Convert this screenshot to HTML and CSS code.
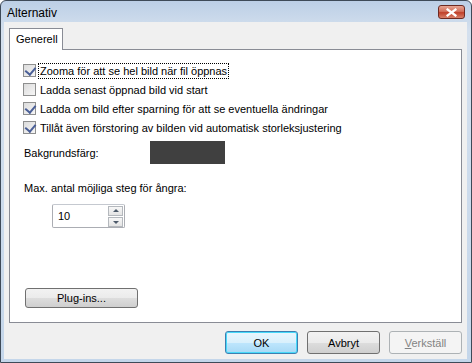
FILE: index.html
```html
<!DOCTYPE html>
<html lang="sv">
<head>
    <meta charset="UTF-8">
    <title>Alternativ</title>
    <link rel="stylesheet" href="styles.css">
</head>
<body>
    <div class="window">
        <div class="titlebar">
            <span class="title">Alternativ</span>
            <button class="close" title="Stäng">
                <svg width="11" height="9" viewBox="0 0 11 9"><path d="M1.5 1.5 L9.5 7.5 M9.5 1.5 L1.5 7.5" stroke="#fff" stroke-width="2.2" stroke-linecap="square"/></svg>
            </button>
        </div>
        <div class="client">
            <div class="tabs">
                <div class="tab active">Generell</div>
            </div>
            <div class="panel">
                <label class="check focus"><span class="box checked"></span><span class="text">Zooma för att se hel bild när fil öppnas</span></label>
                <label class="check"><span class="box"></span><span class="text">Ladda senast öppnad bild vid start</span></label>
                <label class="check"><span class="box checked"></span><span class="text">Ladda om bild efter sparning för att se eventuella ändringar</span></label>
                <label class="check"><span class="box checked"></span><span class="text">Tillåt även förstoring av bilden vid automatisk storleksjustering</span></label>

                <div class="color-row">
                    <span class="label">Bakgrundsfärg:</span>
                    <span class="swatch"></span>
                </div>

                <div class="label undo-label">Max. antal möjliga steg för ångra:</div>
                <div class="spinner">
                    <span class="value">10</span>
                    <span class="spin">
                        <span class="arrow up"></span>
                        <span class="arrow down"></span>
                    </span>
                </div>

                <button class="btn plugins">Plug-ins...</button>
            </div>
            <div class="footer">
                <button class="btn default">OK</button>
                <button class="btn">Avbryt</button>
                <button class="btn" disabled><u>V</u>erkställ</button>
            </div>
        </div>
    </div>
</body>
</html>
```

FILE: styles.css
```css
* {
    box-sizing: border-box;
}
body {
    margin: 0;
    font-family: "Liberation Sans", Arial, sans-serif;
    font-size: 11px;
    color: #000;
}
.window {
    width: 472px;
    height: 363px;
    border: 1px solid #3e4a58;
    border-radius: 6px 6px 0 0;
    background: linear-gradient(#bccfe6, #d4e0ee 30px, #c4d6ea);
    padding: 0 4px 3px 3px;
    display: flex;
    flex-direction: column;
}
.titlebar {
    height: 21px;
    flex-shrink: 0;
    display: flex;
    align-items: center;
    justify-content: space-between;
    padding: 0 2px 0 3px;
}
.title {
    font-size: 12px;
    color: #000;
    padding-top: 2px;
}
.close {
    width: 27px;
    height: 14px;
    margin-top: 1px;
    padding: 0;
    border: 1px solid #6e2a22;
    border-radius: 3px;
    background: linear-gradient(#e8a593, #d2705c 45%, #c0402a 55%, #d8806a);
    display: flex;
    align-items: center;
    justify-content: center;
}
.client {
    flex: 1;
    background: #f0f0f0;
    padding: 6px 5px 0 5px;
    display: flex;
    flex-direction: column;
}
.tabs {
    display: flex;
    height: 22px;
    flex-shrink: 0;
    position: relative;
    z-index: 1;
}
.tab {
    border: 1px solid #898c95;
    border-bottom: none;
    background: #fff;
    padding: 4px 0 0 6px;
    width: 54px;
    height: 22px;
}
.panel {
    height: 274px;
    flex-shrink: 0;
    margin-top: -1px;
    border: 1px solid #898c95;
    background: #fff;
    padding: 11px 13px 14px 13px;
    display: flex;
    flex-direction: column;
}
.check {
    display: flex;
    align-items: center;
    height: 19px;
}
.box {
    width: 13px;
    height: 13px;
    border: 1px solid #8e8f8f;
    background: linear-gradient(135deg, #dcdcdc, #f6f6f6);
    margin-right: 2px;
    flex-shrink: 0;
    position: relative;
}
.box.checked::after {
    content: "";
    position: absolute;
    left: 3px;
    top: 0px;
    width: 5px;
    height: 8px;
    border: solid #4a5f97;
    border-width: 0 2px 2px 0;
    transform: rotate(40deg);
}
.text {
    padding: 1px 1px;
    border: 1px dotted transparent;
}
.focus .text {
    border-color: #000;
}
.color-row {
    display: flex;
    align-items: center;
    margin-top: 4px;
    height: 23px;
}
.label {
    padding-left: 1px;
}
.color-row .label {
    width: 127px;
}
.swatch {
    width: 75px;
    height: 23px;
    background: #404040;
}
.undo-label {
    margin-top: 18px;
}
.spinner {
    margin: 10px 0 0 29px;
    width: 73px;
    height: 24px;
    border: 1px solid #abadb3;
    border-top-color: #c5c9d0;
    border-radius: 2px;
    display: flex;
    align-items: center;
    justify-content: space-between;
}
.value {
    padding-left: 5px;
}
.spin {
    display: flex;
    flex-direction: column;
    gap: 1px;
    margin-right: 1px;
}
.arrow {
    width: 15px;
    height: 10px;
    border: 1px solid #b4b8bd;
    background: linear-gradient(#f7f7f7, #e4e4e4);
    position: relative;
}
.arrow::after {
    content: "";
    position: absolute;
    left: 4px;
    border-left: 3px solid transparent;
    border-right: 3px solid transparent;
}
.arrow.up::after {
    top: 2px;
    border-bottom: 3px solid #4d5a6a;
}
.arrow.down::after {
    top: 3px;
    border-top: 3px solid #4d5a6a;
}
.btn {
    font-family: "Liberation Sans", Arial, sans-serif;
    font-size: 11px;
    color: #000;
    width: 73px;
    height: 23px;
    border: 1px solid #707070;
    border-radius: 3px;
    background: linear-gradient(#f2f2f2, #ebebeb 50%, #dddddd 51%, #cfcfcf);
    padding: 0;
}
.plugins {
    width: 113px;
    height: 20px;
    margin-top: auto;
    margin-left: 2px;
}
.footer {
    display: flex;
    justify-content: flex-end;
    gap: 9px;
    padding: 8px 0 0 0;
}
.btn.default {
    border-color: #3c7fb1;
    background: linear-gradient(#eaf6fd, #d9f0fc 50%, #bee6fd 51%, #a7d9f5);
    box-shadow: inset 0 0 0 1px #48d9f9;
}
.btn:disabled {
    border-color: #adb2b5;
    background: #f4f4f4;
    color: #838383;
}
```
